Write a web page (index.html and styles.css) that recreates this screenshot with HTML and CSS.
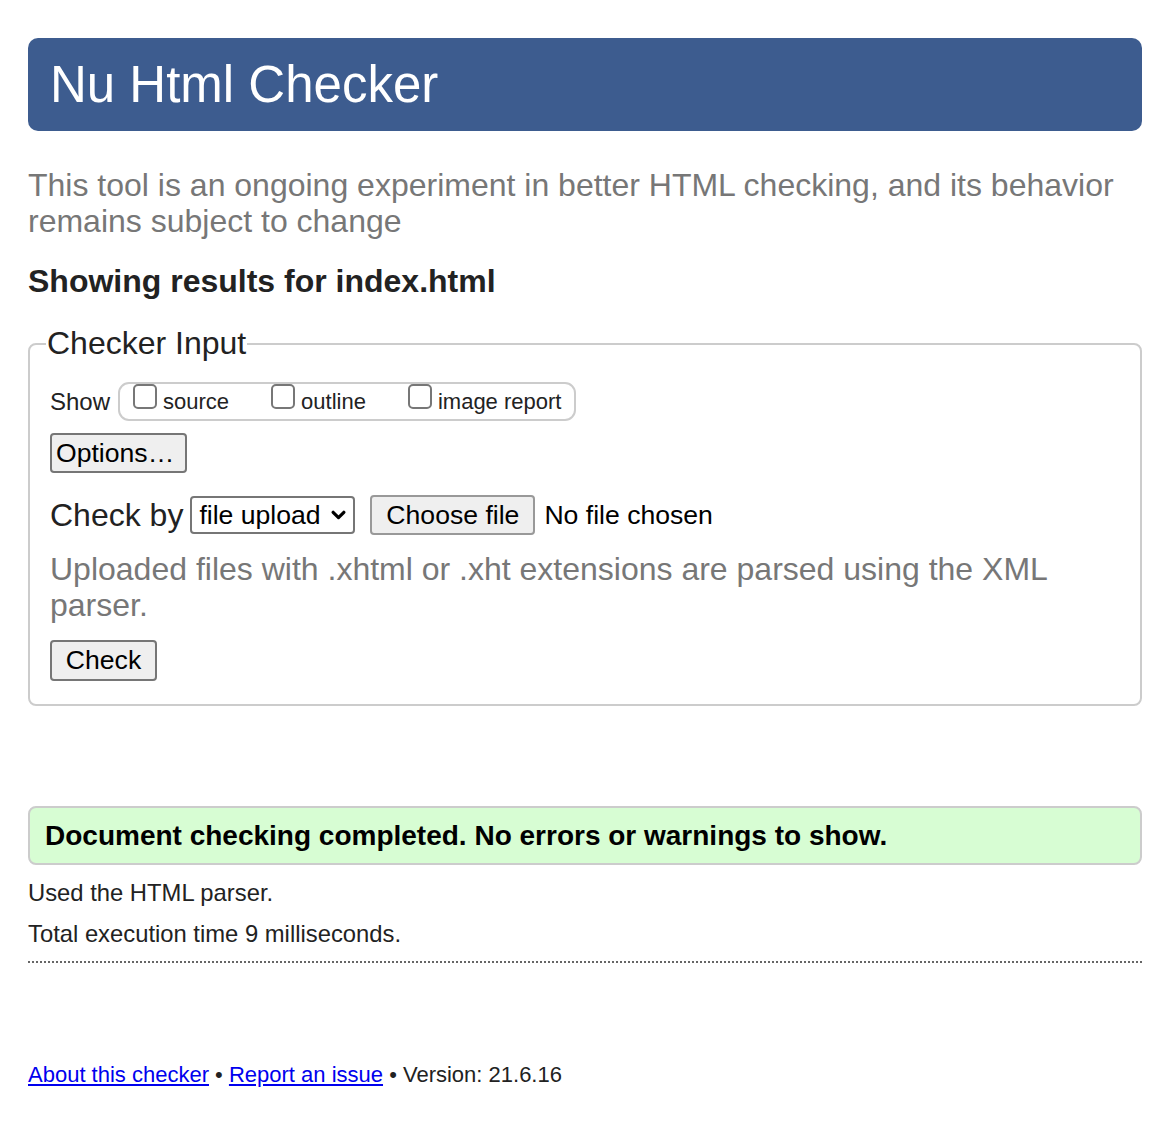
FILE: index.html
```html
<!DOCTYPE html>
<html lang="en">
<head>
<meta charset="utf-8">
<title>Nu Html Checker</title>
<link rel="stylesheet" href="styles.css">
</head>
<body>
<header class="banner"><h1 class="title">Nu Html Checker</h1></header>
<p class="intro">This tool is an ongoing experiment in better HTML checking, and its behavior remains subject to change</p>
<h2 class="results">Showing results for index.html</h2>
<fieldset class="input">
  <legend class="legend">Checker Input</legend>
  <div class="show-row">
    <span class="show-label">Show</span>
    <div class="show-box">
      <label class="opt"><span class="cb"></span>source</label>
      <label class="opt"><span class="cb"></span>outline</label>
      <label class="opt"><span class="cb"></span>image report</label>
    </div>
  </div>
  <div class="btn-row"><span class="btn btn-options">Options…</span></div>
  <div class="checkby-row">
    <span class="checkby-label">Check by</span>
    <span class="select">file upload<svg class="chev" viewBox="0 0 14 10" width="15" height="11"><path d="M2 2 L7 7 L12 2" fill="none" stroke="#000" stroke-width="3" stroke-linecap="round" stroke-linejoin="round"/></svg></span>
    <span class="btn btn-file">Choose file</span>
    <span class="nofile">No file chosen</span>
  </div>
  <p class="hint">Uploaded files with .xhtml or .xht extensions are parsed using the XML parser.</p>
  <div class="btn-row"><span class="btn btn-check">Check</span></div>
</fieldset>
<div class="success">Document checking completed. No errors or warnings to show.</div>
<p class="info">Used the HTML parser.</p>
<p class="info">Total execution time 9 milliseconds.</p>
<hr class="dots">
<p class="footer"><a href="#">About this checker</a> • <a href="#">Report an issue</a> • Version: 21.6.16</p>
</body>
</html>
```
FILE: styles.css
```css
html, body { margin: 0; padding: 0; background: #fff; }
body {
  padding: 38px 22px 0 28px;
  font-family: "Liberation Sans", Arial, Helvetica, sans-serif;
  color: #222;
}
.banner {
  background: #3d5c8f;
  border-radius: 10px;
  height: 93px;
  display: flex;
  align-items: center;
  padding-left: 22px;
}
.title {
  margin: 0;
  color: #fff;
  font-weight: normal;
  font-size: 51px;
  line-height: 1;
}
.intro {
  margin: 36px 0 0 0;
  font-size: 32px;
  line-height: 36px;
  color: #777;
}
.results {
  margin: 24px 0 0 0;
  font-size: 32px;
  line-height: 36px;
  font-weight: bold;
  color: #222;
}
.input {
  margin: 26px 0 0 0;
  border: 2px solid #ccc;
  border-radius: 8px;
  padding: 0 20px 23px 20px;
}
.legend {
  font-size: 32px;
  padding: 0 1px;
  margin-left: -4px;
  color: #222;
}
.show-row {
  display: flex;
  align-items: center;
  gap: 8px;
  margin-top: 20px;
  font-size: 22px;
  color: #222;
}
.show-label { font-size: 24px; }
.show-box {
  display: flex;
  align-items: center;
  gap: 42px;
  border: 2px solid #ccc;
  border-radius: 11px;
  height: 39px;
  box-sizing: border-box;
  padding: 0 13px 0 13px;
}
.opt { display: flex; align-items: center; gap: 6px; }
.cb {
  display: inline-block;
  width: 24px;
  height: 25px;
  border: 2px solid #777;
  border-radius: 5px;
  box-sizing: border-box;
  margin-top: -10px;
}
.btn-row { margin-top: 12px; display: flex; }
.btn {
  display: inline-flex;
  align-items: center;
  justify-content: center;
  box-sizing: border-box;
  background: #efefef;
  border: 2px solid #767676;
  border-radius: 4px;
  color: #000;
  font-size: 26.6px;
}
.btn-options { width: 137px; height: 40px; justify-content: flex-start; padding-left: 4px; }
.checkby-row {
  display: flex;
  align-items: center;
  margin-top: 22px;
}
.checkby-label { font-size: 32px; margin-right: 7px; color: #222; }
.select {
  display: inline-flex;
  align-items: center;
  justify-content: space-between;
  box-sizing: border-box;
  height: 38px;
  width: 165px;
  border: 2px solid #767676;
  border-radius: 4px;
  padding: 0 7px 0 7px;
  font-size: 26.6px;
  color: #000;
}
.btn-file { width: 165px; height: 40px; margin-left: 15px; border-color: #999; }
.nofile { font-size: 26.6px; margin-left: 9px; color: #000; }
.hint {
  margin: 16px 0 0 0;
  font-size: 32px;
  line-height: 36px;
  color: #777;
}
.btn-check { width: 107px; height: 41px; margin-top: 5px; }
.success {
  margin-top: 100px;
  background: #d7fdd3;
  border: 2px solid #ccc;
  border-radius: 8px;
  height: 59px;
  box-sizing: border-box;
  display: flex;
  align-items: center;
  padding-left: 15px;
  font-size: 28px;
  font-weight: bold;
  color: #000;
}
.info {
  margin: 13px 0 0 0;
  font-size: 23.8px;
  line-height: 28px;
  color: #222;
}
.success + .info { margin-top: 14px; }
.dots {
  margin: 13px 0 0 0;
  border: 0;
  border-top: 2px dotted #666;
  height: 0;
}
.footer {
  margin: 98px 0 0 0;
  font-size: 22px;
  line-height: 27px;
  color: #222;
}
.footer a { color: #00e; }
```
